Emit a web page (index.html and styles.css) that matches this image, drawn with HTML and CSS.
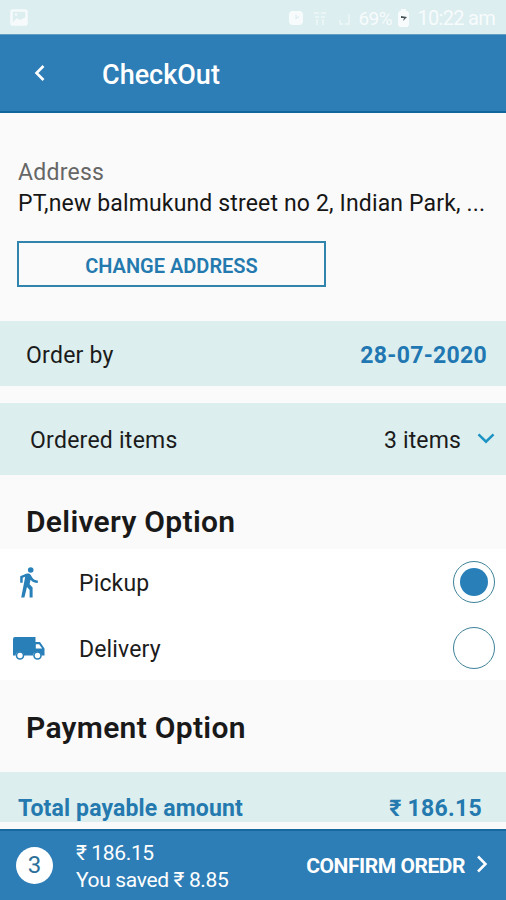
FILE: index.html
```html
<!DOCTYPE html>
<html lang="en">
<head>
<meta charset="utf-8">
<title>CheckOut</title>
<link rel="stylesheet" href="styles.css">
</head>
<body>
<div class="screen">
  <div class="status">
    <svg class="status-picture" width="18" height="18" viewBox="0 0 18 18"><rect x="1.500" y="1.500" width="15" height="14" rx="1" fill="none" stroke="#fff" stroke-width="2.500"/><path d="M2 14l5-5 3 2 6-3v7H2z" fill="#fff"/><circle cx="6" cy="5.500" r="1.300" fill="#fff"/></svg>
    <div class="status-right">
      <svg class="alarm" width="16" height="16" viewBox="0 0 16 16"><rect x="1" y="1" width="14" height="14" rx="4" fill="#fff"/><path d="M8 4.500v4l3-2" fill="none" stroke="#dceef0" stroke-width="1.200"/></svg>
      <svg class="data" width="12" height="16" viewBox="0 0 12 16"><path d="M0 3h5M7 3h5M1 7h4M7 7h4M3 9v6M9 9v6" stroke="#fff" stroke-width="1.500" opacity=".7"/></svg>
      <svg class="signal" width="11" height="13" viewBox="0 0 11 13"><path d="M1 8v4h3M6 12h4V2" fill="none" stroke="#fff" stroke-width="1.300" opacity=".7"/></svg>
      <span class="charge">69%</span>
      <svg class="battery" width="11" height="18" viewBox="0 0 11 18"><path d="M3 0h5v2h1.500l1.500 2v12l-1.500 2h-8L0 16V4l1.500-2H3z" fill="#fff"/><path d="M3 7l6 1-4 4 1-3H3z" fill="#222c30"/></svg>
      <span class="clock">10:22 am</span>
    </div>
  </div>

  <header class="appbar">
    <svg class="back" width="12" height="18" viewBox="0 0 12 18"><path d="M10.500 2L3.500 9l7 7" fill="none" stroke="#fff" stroke-width="2.600"/></svg>
    <h1 class="title">CheckOut</h1>
  </header>

  <section class="address">
    <div class="address-label">Address</div>
    <div class="address-text">PT,new balmukund street no 2, Indian Park, ...</div>
    <button class="change"><span>CHANGE ADDRESS</span></button>
  </section>

  <section class="band order-by">
    <span class="order-label">Order by</span>
    <span class="date">28-07-2020</span>
  </section>

  <section class="band items">
    <span class="items-label">Ordered items</span>
    <span class="items-count">3 items</span>
    <svg class="chevron-down" width="18" height="12" viewBox="0 0 18 12"><path d="M1.500 2.300L9 9.700l7.500-7.400" fill="none" stroke="#1d93c4" stroke-width="2.500"/></svg>
  </section>

  <h2 class="heading delivery-heading"><span>Delivery Option</span></h2>
  <section class="options">
    <div class="option">
      <div class="option-icon walk">
        <svg width="20" height="31" viewBox="0 0 20 31" fill="#2980b9"><circle cx="11.700" cy="3" r="2.800"/><path d="M7 6.700L1.200 9.300v6.500h2.500v-5l2.500-1-4 20.600h3.200l2.600-10.500 2.600 3v7.500h3V20.500l-3-3.200.9-4.500c1.800 2.100 4.400 3.200 7.300 3.200v-2.600c-2.500 0-4.500-1.200-5.600-3l-1.300-2.200c-.8-1.300-2.200-2-4.600-1.500z"/></svg>
      </div>
      <span class="pickup">Pickup</span>
      <span class="radio checked"></span>
    </div>
    <div class="option">
      <div class="option-icon">
        <svg width="32" height="24" viewBox="0 0 32 24" fill="#2980b9"><path d="M2 1H22.500v5h4.500l4.500 6.500v7h-3a4.300 4.300 0 0 0-8.500 0h-9a4.300 4.300 0 0 0-8.500 0H0V3Q0 1 2 1z"/><path d="M22.800 8.200h3.300l3 4.300h-6.300z" fill="#fff"/><circle cx="7" cy="19.500" r="4.300"/><circle cx="24.500" cy="19.500" r="4.300"/><circle cx="7" cy="19.500" r="2.700" fill="#fff"/><circle cx="24.500" cy="19.500" r="2.700" fill="#fff"/></svg>
      </div>
      <span class="delivery">Delivery</span>
      <span class="radio"></span>
    </div>
  </section>

  <h2 class="heading payment-heading"><span>Payment Option</span></h2>
  <section class="total">
    <span class="total-label">Total payable amount</span>
    <span class="total-value">₹ 186.15</span>
  </section>

  <footer class="footer">
    <div class="count">3</div>
    <div class="summary">
      <div><span class="price">₹ 186.15</span></div>
      <div><span class="saved">You saved ₹ 8.85</span></div>
    </div>
    <div class="confirm">CONFIRM OREDR</div>
    <svg class="chevron-right" width="12" height="18" viewBox="0 0 12 18"><path d="M2 1.500L9.500 9 2 16.500" fill="none" stroke="#fff" stroke-width="2.500"/></svg>
  </footer>
</div>
</body>
</html>
```

FILE: styles.css
```css
* { box-sizing: border-box; }
body { margin: 0; background: #fafafa; font-family: Roboto, "Liberation Sans", sans-serif; color: #1b1b1b; }
svg { display: block; flex: none; }
.screen { width: 506px; height: 900px; overflow: hidden; display: flex; flex-direction: column; background: #fafafa; white-space: nowrap; }
.screen > * { flex: none; }

.status { height: 34px; background: #dceef0; display: flex; justify-content: space-between; align-items: center; padding: 2px 11px 0 10px; color: #fff; font-size: 20px; }
.status-picture { opacity: .75; }
.status-right { display: flex; align-items: center; opacity: .8; }
.data { margin-left: 10px; }
.signal { margin-left: 13px; }
.charge { margin-left: 8px; width: 35px; font-size: 19px; letter-spacing: -0.5px; }
.battery { margin-left: 5px; }
.clock { margin-left: 8px; letter-spacing: -0.7px; }

.appbar { height: 79px; background: #2d7db6; border-top: 1px solid #5fa0c2; border-bottom: 2px solid #10659c; display: flex; align-items: center; padding: 4px 0 0 33px; color: #fff; }
.back { margin-top: -5px; }
.title { margin: 0 0 0 57px; font-size: 27px; line-height: 32px; font-weight: 500; }

.address { height: 208px; padding: 46px 17px 0; display: flex; flex-direction: column; align-items: flex-start; }
.address-label { margin-left: 1px; font-size: 23px; line-height: 28px; letter-spacing: 0.25px; color: #666; }
.address-text { margin: 2px 0 0 1px; font-size: 23px; line-height: 30px; letter-spacing: 0.15px; color: #161616; }
.change { margin-top: 22px; width: 309px; height: 46px; padding: 3px 0 0; background: none; border: 2px solid #3184ac; color: #2479ae; font: 600 20px/24px Roboto, sans-serif; }

.band { background: #dceeee; display: flex; align-items: center; font-size: 23px; line-height: 28px; }
.order-by { height: 65px; padding: 4px 19px 0 26px; justify-content: space-between; }
.order-label { letter-spacing: 0.25px; }
.date { font-weight: 700; letter-spacing: 0.3px; color: #2177b2; }
.items { height: 72px; margin-top: 17px; padding: 4px 11px 0 30px; }
.items-label { letter-spacing: 0.25px; }
.items-count { margin-left: auto; letter-spacing: 0.15px; }
.chevron-down { margin: -6px 0 0 16px; }

.heading { margin: 0; padding-left: 26px; display: flex; align-items: center; font-size: 30px; line-height: 36px; font-weight: 600; letter-spacing: 0.3px; color: #191919; }
.delivery-heading { height: 74px; padding-top: 20px; }
.payment-heading { height: 92px; padding-top: 4px; }
.options { height: 131px; background: #fff; }
.option { height: 66px; display: flex; align-items: center; padding: 0 11px 0 13px; font-size: 23px; line-height: 28px; }
.option-icon { width: 66px; }
.walk { padding-left: 6px; }
.pickup, .delivery { padding-top: 3px; letter-spacing: 0.15px; }
.radio { margin-left: auto; width: 42px; height: 42px; border: 1.500px solid #3f8299; border-radius: 50%; display: grid; place-items: center; }
.checked::after { content: ""; width: 28px; height: 28px; border-radius: 50%; background: #2980b9; }

.total { height: 50px; padding: 24px 24px 0 18px; display: flex; justify-content: space-between; background: #dceeee; color: #2479ae; font-size: 23px; line-height: 26px; font-weight: 700; }
.total-label { letter-spacing: 0.15px; }
.total-value { letter-spacing: 0.3px; }
.footer { margin-top: 7px; height: 71px; background: #2d7db6; border-top: 2px solid #17699d; display: flex; align-items: center; padding: 0 18px 0 16px; color: #fff; }
.count { width: 37px; height: 37px; border-radius: 50%; background: #fff; color: #2d7099; display: grid; place-items: center; font-size: 24px; line-height: 37px; }
.summary { margin-left: 23px; font-size: 21px; line-height: 27px; padding-top: 2px; letter-spacing: -0.35px; }
.confirm { margin-left: auto; font-size: 21px; font-weight: 700; letter-spacing: -0.45px; }
.chevron-right { margin: -3px 0 0 11px; }
```
